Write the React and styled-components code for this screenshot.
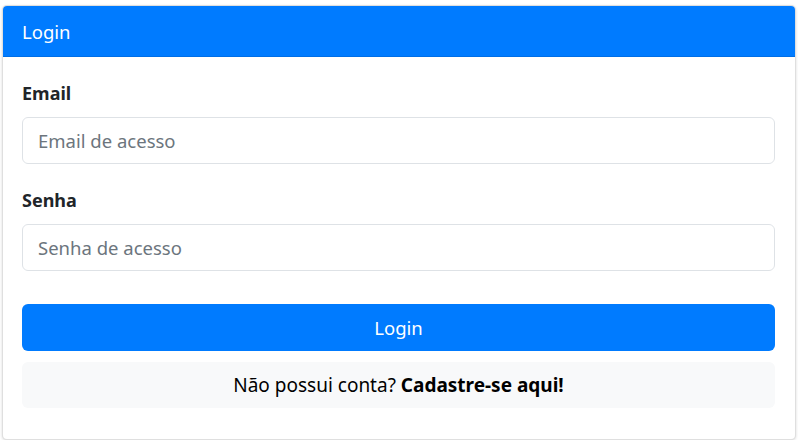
import React from 'react';
import styled, {createGlobalStyle} from 'styled-components';

const Global = createGlobalStyle`
  body {
    margin: 0;
    background: #fff;
    font-family: "Noto Sans", "Open Sans", sans-serif;
    color: #212529;
  }
  * { box-sizing: border-box; }
`

export default function App() {
    return (
        <Page>
            <Global/>
            <Card>
                <Header>Login</Header>
                <Body>
                    <Group>
                        <Label>Email</Label>
                        <Input placeholder="Email de acesso"/>
                    </Group>
                    <Group $last>
                        <Label>Senha</Label>
                        <Input type="password" placeholder="Senha de acesso"/>
                    </Group>
                    <Button>Login</Button>
                    <Footer>
                        Não possui conta? <b>Cadastre-se aqui!</b>
                    </Footer>
                </Body>
            </Card>
        </Page>
    )
}

const Page = styled.div`
  padding: 5px 2px 0 2px;
`
const Card = styled.div`
  width: 794px;
  height: 435px;
  border: 1px solid rgba(0, 0, 0, .125);
  border-radius: 5px;
  box-shadow: 0 1px 3px rgba(0, 0, 0, .15);
  overflow: hidden;
  background: #fff;
`
const Header = styled.div`
  height: 51px;
  background: #007bff;
  color: #fff;
  font-size: 18.5px;
  padding: 0 19px;
  display: flex;
  align-items: center;
  border-bottom: 1px solid #006ee6;
`
const Body = styled.div`
  padding: 20px 20px 0 19px;
  display: flex;
  flex-direction: column;
`
const Group = styled.div`
  display: flex;
  flex-direction: column;
  margin-bottom: ${props => props.$last ? '33px' : '20px'};
`
const Label = styled.label`
  font-weight: bold;
  font-size: 18px;
  height: 32px;
  margin-bottom: 8px;
  line-height: 32px;
`
const Input = styled.input`
  height: 47px;
  border: 1px solid #dee2e6;
  border-radius: 6px;
  padding: 0 15px;
  font-family: inherit;
  font-size: 18.5px;
  color: #495057;
  &::placeholder {
    color: #6c757d;
  }
  outline: none;
`
const Button = styled.button`
  height: 47px;
  border: none;
  border-radius: 6px;
  background: #007bff;
  color: #fff;
  font-family: inherit;
  font-size: 18.5px;
  margin-bottom: 11px;
`
const Footer = styled.div`
  height: 46px;
  background: #f8f9fa;
  border-radius: 6px;
  display: flex;
  align-items: center;
  justify-content: center;
  font-size: 19px;
  color: #000;
  white-space: pre;
  b { font-weight: bold; }
`
